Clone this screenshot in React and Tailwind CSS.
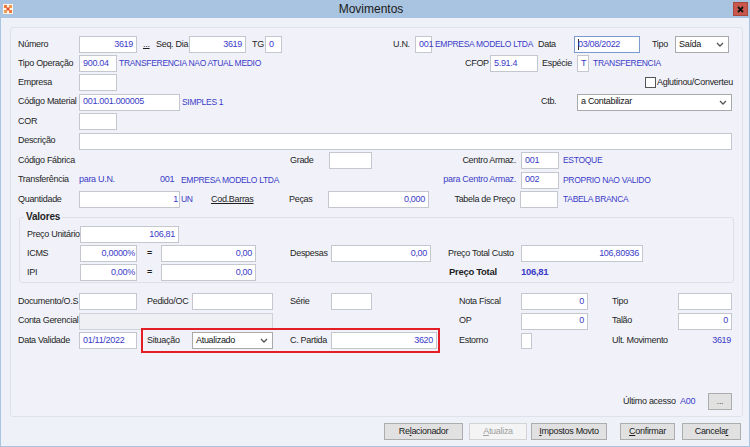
import React from "react";

const BLUE = "text-[#3b3bc8]";
const UP = "text-[8.5px] tracking-[-0.3px]";

function Inp({ className = "", children, right = false, disabled = false, focus = false }) {
  return (
    <div
      className={`h-[17px] shrink-0 border flex items-center px-[3px] whitespace-nowrap ${BLUE} ${
        right ? "justify-end" : "justify-start"
      } ${disabled ? "bg-[#eef0f4] border-[#cfd2d8]" : "bg-white"} ${
        focus ? "border-[#7b9bcf]" : disabled ? "" : "border-[#c4c7cd]"
      } ${className}`}
    >
      {children}
    </div>
  );
}

function Chevron() {
  return (
    <svg width="8" height="5" viewBox="0 0 8 5" className="shrink-0">
      <path d="M1 1 L4 4 L7 1" fill="none" stroke="#555" strokeWidth="1.3" />
    </svg>
  );
}

function Sel({ className = "", children }) {
  return (
    <div
      className={`h-[17px] shrink-0 border border-[#a9a9a9] bg-white flex items-center justify-between pl-[3px] pr-[4px] text-[#141414] ${className}`}
    >
      <span>{children}</span>
      <Chevron />
    </div>
  );
}

function Lb({ className = "", children }) {
  return <div className={`shrink-0 whitespace-nowrap ${className}`}>{children}</div>;
}

function Row({ className = "h-[19px]", children }) {
  return <div className={`flex items-center shrink-0 ${className}`}>{children}</div>;
}

function Btn({ className = "", children, disabled = false }) {
  return (
    <div
      className={`h-[17px] shrink-0 flex items-center justify-center border ${
        disabled
          ? "bg-[#f4f4f4] border-[#d3d3d3] text-[#a0a0a0]"
          : "bg-[#e1e1e1] border-[#adadad] text-[#1a1a1a]"
      } ${className}`}
    >
      {children}
    </div>
  );
}

export default function App() {
  return (
    <div className="w-[750px] h-[447px] overflow-hidden bg-[#eff1f8] font-['Liberation_Sans',Arial,sans-serif] text-[9px] tracking-[-0.3px] text-[#1e1e1e] flex flex-col">
      {/* Title bar */}
      <div className="h-[18px] shrink-0 bg-[#a9c4e0] flex items-center tracking-normal">
        <div className="ml-[3px] w-[10px] h-[10px] bg-[#fff2e6] flex items-center justify-center">
          <svg width="10" height="10" viewBox="0 0 10 10">
            <rect x="1" y="1" width="3" height="3" fill="#f07a3a" />
            <rect x="6" y="1" width="3" height="3" fill="#f29a50" />
            <rect x="3.5" y="3.5" width="3" height="3" fill="#e8502a" />
            <rect x="1" y="6" width="3" height="3" fill="#f29a50" />
            <rect x="6" y="6" width="3" height="3" fill="#f07a3a" />
          </svg>
        </div>
        <div className="flex-1 text-center text-[12px] text-[#1a1a1a] pr-[4px]">Movimentos</div>
        <div className="mr-[2px] w-[15px] h-[14px] bg-[#c9574b] border border-[#a8473d] flex items-center justify-center">
          <svg width="7" height="7" viewBox="0 0 7 7">
            <path d="M1 1 L6 6 M6 1 L1 6" stroke="#111" strokeWidth="1.8" />
          </svg>
        </div>
      </div>

      {/* Body */}
      <div className="flex-1 flex flex-col border-l border-r border-b border-[#a9c4e0] pl-[9px]">
        {/* Panel */}
        <div className="mt-[9px] w-[733px] h-[390px] border border-[#dfe2e9] rounded-[3px] bg-[#f1f2f9] flex flex-col pl-[7px] pt-[7px] pb-[5px]">
          {/* Row 1 */}
          <Row>
            <Lb className="w-[61px]">Número</Lb>
            <Inp right className="w-[58px]">3619</Inp>
            <Lb className="ml-[6px] w-[13px] underline">...</Lb>
            <Lb className="w-[33px]">Seq. Dia</Lb>
            <Inp right className="w-[57px]">3619</Inp>
            <Lb className="ml-[6px] w-[13px]">TG</Lb>
            <Inp className="w-[17px] justify-center">0</Inp>
            <Lb className="ml-[111px] w-[22px]">U.N.</Lb>
            <Inp className="w-[17px] px-[1px]">001</Inp>
            <Lb className={`w-[106px] pl-[3px] ${BLUE} ${UP}`}>EMPRESA MODELO LTDA</Lb>
            <Lb className="w-[36px]">Data</Lb>
            <Inp focus className="w-[66px] px-[2px]">
              <span className="inline-block w-[1px] h-[11px] bg-[#2a2a2a] mr-[-1px]" />
              03/08/2022
            </Inp>
            <Lb className="ml-[12px] w-[23px]">Tipo</Lb>
            <Sel className="w-[54px]">Saída</Sel>
          </Row>
          {/* Row 2 */}
          <Row>
            <Lb className="w-[61px]">Tipo Operação</Lb>
            <Inp className="w-[38px]">900.04</Inp>
            <Lb className={`w-[348px] pl-[2px] ${BLUE} ${UP}`}>TRANSFERENCIA NAO ATUAL MEDIO</Lb>
            <Lb className="w-[25px]">CFOP</Lb>
            <Inp className="w-[48px]">5.91.4</Inp>
            <Lb className="ml-[4px] w-[35px]">Espécie</Lb>
            <Inp className="w-[12px] px-[2px]">T</Inp>
            <Lb className={`ml-[4px] ${BLUE} ${UP}`}>TRANSFERENCIA</Lb>
          </Row>
          {/* Row 3 */}
          <Row>
            <Lb className="w-[61px]">Empresa</Lb>
            <Inp className="w-[38px]"></Inp>
            <div className="ml-[528px] w-[11px] h-[11px] border border-[#555] bg-white shrink-0" />
            <Lb className="ml-[1px]">Aglutinou/Converteu</Lb>
          </Row>
          {/* Row 4 */}
          <Row className="h-[20px]">
            <Lb className="w-[61px]">Código Material</Lb>
            <Inp className="w-[101px]">001.001.000005</Inp>
            <Lb className={`w-[361px] pl-[2px] ${BLUE} ${UP}`}>SIMPLES 1</Lb>
            <Lb className="w-[36px]">Ctb.</Lb>
            <Sel className="w-[155px]">a Contabilizar</Sel>
          </Row>
          {/* Row 5 */}
          <Row>
            <Lb className="w-[61px]">COR</Lb>
            <Inp className="w-[38px]"></Inp>
          </Row>
          {/* Row 6 */}
          <Row className="h-[20px]">
            <Lb className="w-[61px]">Descrição</Lb>
            <Inp className="w-[653px]"></Inp>
          </Row>
          {/* Row 7 */}
          <Row>
            <Lb className="w-[272px]">Código Fábrica</Lb>
            <Lb className="w-[39px]">Grade</Lb>
            <Inp className="w-[43px]"></Inp>
            <Lb className="w-[144px] text-right">Centro Armaz.</Lb>
            <Inp className="ml-[5px] w-[38px]">001</Inp>
            <Lb className={`ml-[4px] ${BLUE} ${UP}`}>ESTOQUE</Lb>
          </Row>
          {/* Row 8 */}
          <Row className="h-[20px]">
            <Lb className="w-[61px]">Transferência</Lb>
            <Lb className={`w-[81px] ${BLUE}`}>para U.N.</Lb>
            <Lb className={`w-[21px] ${BLUE}`}>001</Lb>
            <Lb className={`w-[259px] ${BLUE} ${UP}`}>EMPRESA MODELO LTDA</Lb>
            <Lb className={`w-[76px] text-right ${BLUE}`}>para Centro Armaz.</Lb>
            <Inp className="ml-[5px] w-[38px]">002</Inp>
            <Lb className={`ml-[4px] ${BLUE} ${UP}`}>PROPRIO NAO VALIDO</Lb>
          </Row>
          {/* Row 9 */}
          <Row>
            <Lb className="w-[61px]">Quantidade</Lb>
            <Inp right className="w-[101px] pr-[1px]">1</Inp>
            <Lb className={`w-[31px] pl-[1px] ${BLUE} ${UP}`}>UN</Lb>
            <Lb className="w-[78px] underline">Cod.Barras</Lb>
            <Lb className="w-[39px]">Peças</Lb>
            <Inp right className="w-[101px]">0,000</Inp>
            <Lb className="w-[86px] text-right">Tabela de Preço</Lb>
            <Inp className="ml-[5px] w-[38px]"></Inp>
            <Lb className={`ml-[5px] ${BLUE} ${UP}`}>TABELA BRANCA</Lb>
          </Row>

          {/* Valores group */}
          <div className="relative mt-[8px] ml-[1px] w-[715px] border border-[#dde0e7] rounded-[3px] pl-[7px] pt-[7px] shrink-0">
            <div className="absolute left-[4px] top-[-7px] px-[2px] bg-[#f1f2f9] font-bold text-[10px] tracking-[-0.2px] leading-[12px] text-[#1e1e1e]">
              Valores
            </div>
            <Row>
              <Lb className="w-[53px]">Preço Unitário</Lb>
              <Inp right className="w-[99px]">106,81</Inp>
            </Row>
            <Row>
              <Lb className="w-[53px]">ICMS</Lb>
              <Inp right className="w-[57px] pr-[1px]">0,0000%</Inp>
              <Lb className="w-[24px] pl-[10px] font-bold">=</Lb>
              <Inp right className="w-[95px]">0,00</Inp>
              <Lb className="ml-[34px] w-[41px]">Despesas</Lb>
              <Inp right className="w-[100px]">0,00</Inp>
              <Lb className="ml-[17px] w-[73px]">Preço Total Custo</Lb>
              <Inp right className="w-[122px]">106,80936</Inp>
            </Row>
            <Row>
              <Lb className="w-[53px]">IPI</Lb>
              <Inp right className="w-[57px] pr-[1px]">0,00%</Inp>
              <Lb className="w-[24px] pl-[10px] font-bold">=</Lb>
              <Inp right className="w-[95px]">0,00</Inp>
              <Lb className="ml-[193px] w-[72px] font-bold text-[9.5px]">Preço Total</Lb>
              <Lb className={`font-bold text-[9.5px] ${BLUE}`}>106,81</Lb>
            </Row>
          </div>

          {/* Row A */}
          <Row className="h-[19px] mt-[9px]">
            <Lb className="w-[61px]">Documento/O.S</Lb>
            <Inp className="w-[58px]"></Inp>
            <Lb className="ml-[10px] w-[45px]">Pedido/OC</Lb>
            <Inp className="w-[81px]"></Inp>
            <Lb className="ml-[17px] w-[41px]">Série</Lb>
            <Inp className="w-[41px]"></Inp>
            <Lb className="ml-[87px] w-[62px]">Nota Fiscal</Lb>
            <Inp right className="w-[67px]">0</Inp>
            <Lb className="ml-[24px] w-[66px]">Tipo</Lb>
            <Inp className="w-[54px]"></Inp>
          </Row>
          {/* Row B */}
          <Row className="h-[20px]">
            <Lb className="w-[61px]">Conta Gerencial</Lb>
            <Inp disabled className="w-[194px]"></Inp>
            <Lb className="ml-[186px] w-[62px]">OP</Lb>
            <Inp right className="w-[67px]">0</Inp>
            <Lb className="ml-[24px] w-[66px]">Talão</Lb>
            <Inp right className="w-[54px]">0</Inp>
          </Row>
          {/* Row C */}
          <Row className="h-[19px]">
            <Lb className="w-[61px]">Data Validade</Lb>
            <Inp className="w-[58px]">01/11/2022</Inp>
            <div className="ml-[4px] w-[299px] h-[25px] shrink-0 border-2 border-[#e41e25] flex items-center pl-[4px]">
              <Lb className="w-[45px]">Situação</Lb>
              <Sel className="w-[81px]">Atualizado</Sel>
              <Lb className="ml-[17px] w-[41px]">C. Partida</Lb>
              <Inp right className="w-[106px]">3620</Inp>
            </div>
            <Lb className="ml-[19px] w-[62px]">Estorno</Lb>
            <div className="w-[11px] h-[16px] shrink-0 border border-[#c4c7cd] bg-white" />
            <Lb className="ml-[80px] w-[119px] flex justify-between">
              <span>Ult. Movimento</span>
              <span className={BLUE}>3619</span>
            </Lb>
          </Row>

          {/* Último acesso */}
          <Row className="h-[19px] mt-auto">
            <Lb className="ml-[605px] w-[57px]">Último acesso</Lb>
            <Lb className={`w-[28px] ${BLUE}`}>A00</Lb>
            <Btn className="w-[24px]">
              <span className="text-[#555] leading-none">...</span>
            </Btn>
          </Row>
        </div>

        {/* Buttons */}
        <div className="flex items-center mt-[6px] ml-[374px]">
          <Btn className="w-[79px]">
            Re<span className="underline">l</span>acionador
          </Btn>
          <Btn disabled className="ml-[6px] w-[58px]">
            <span className="underline">A</span>tualiza
          </Btn>
          <Btn className="ml-[4px] w-[76px]">
            <span className="underline">I</span>mpostos Movto
          </Btn>
          <Btn className="ml-[13px] w-[55px]">
            <span className="underline">C</span>onfirmar
          </Btn>
          <Btn className="ml-[7px] w-[59px]">
            Cancela<span className="underline">r</span>
          </Btn>
        </div>
      </div>
    </div>
  );
}
